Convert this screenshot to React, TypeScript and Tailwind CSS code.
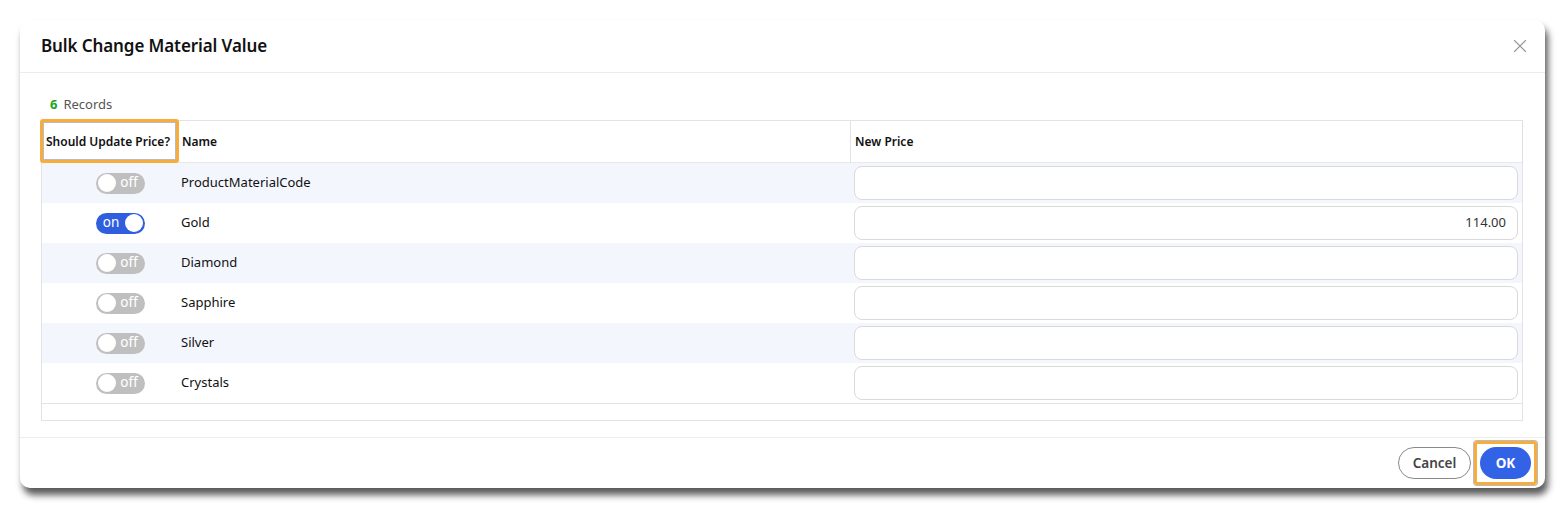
import { X } from "lucide-react";

type Row = { name: string; on: boolean; price: string };

const ROWS: Row[] = [
  { name: "ProductMaterialCode", on: false, price: "" },
  { name: "Gold", on: true, price: "114.00" },
  { name: "Diamond", on: false, price: "" },
  { name: "Sapphire", on: false, price: "" },
  { name: "Silver", on: false, price: "" },
  { name: "Crystals", on: false, price: "" },
];

function Toggle({ on }: { on: boolean }) {
  return (
    <div
      className={`flex items-center w-[49px] h-[21px] rounded-full px-[2px] ${
        on ? "bg-[#2f5fde]" : "bg-[#bfbfbf]"
      }`}
    >
      {on ? (
        <>
          <span className="flex-1 text-center text-[13.5px] leading-none text-white pb-[1px]">on</span>
          <span className="w-[18px] h-[18px] rounded-full bg-white" />
        </>
      ) : (
        <>
          <span className="w-[18px] h-[18px] rounded-full bg-white" />
          <span className="flex-1 text-center text-[13.5px] leading-none text-white pb-[1px]">off</span>
        </>
      )}
    </div>
  );
}

export default function App() {
  return (
    <div
      className="w-[1565px] h-[508px] bg-white pt-[20px] pl-[20px]"
      style={{ fontFamily: '"Noto Sans", "Open Sans", sans-serif' }}
    >
      <div className="w-[1525px] h-[468px] bg-white rounded-[10px] shadow-[3px_7px_7px_rgba(0,0,0,0.65)] flex flex-col">
        {/* Header */}
        <div className="h-[53px] flex items-center justify-between pl-[21px] pr-[14px] border-b border-[#ececec]">
          <span className="text-[17px] font-semibold text-[#111] tracking-[-0.1px]">Bulk Change Material Value</span>
          <X size={22} strokeWidth={1.2} className="text-[#999]" />
        </div>

        {/* Body */}
        <div className="flex-1 px-[21px] pt-[18px]">
          <div className="text-[13px] text-[#555] h-[27px] mb-[2px] flex items-center pl-[9px] gap-[6px]">
            <span className="text-[#1aa51a] font-bold">6</span>
            <span>Records</span>
          </div>
          <div className="w-[1482px] border border-[#e3e3e3]">
            {/* Table head */}
            <div className="flex h-[42px] text-[12px] font-semibold text-[#111] border-b border-[#e8e8e8] shadow-[0_1px_2px_rgba(0,0,0,0.05)]">
              <div className="relative w-[136px] flex items-center pl-[4px]">
                <span>Should Update Price?</span>
                <div className="absolute left-[-2px] top-[-2px] w-[139px] h-[44px] rounded-[3px] border-[3px] border-[#f6ad3e] shadow-[inset_0_0_0_1px_#bbb]" />
              </div>
              <div className="w-[673px] flex items-center pl-[4px] border-r border-[#e3e3e3]">Name</div>
              <div className="flex-1 flex items-center pl-[4px]">New Price</div>
            </div>
            {/* Rows */}
            {ROWS.map((r, i) => (
              <div
                key={r.name}
                className={`flex h-[40px] items-center text-[13px] text-[#111] ${
                  i % 2 === 0 ? "bg-[#f3f6fd]" : "bg-white"
                }`}
              >
                <div className="w-[136px] flex justify-center pl-[20px]">
                  <Toggle on={r.on} />
                </div>
                <div className="w-[673px] pl-[3px]">{r.name}</div>
                <div className="flex-1 pl-[3px] pr-[4px]">
                  <div className="h-[34px] rounded-[8px] border border-[#d9d9d9] bg-white flex items-center justify-end pr-[11px] text-[#333]">
                    {r.price}
                  </div>
                </div>
              </div>
            ))}
            <div className="h-[17px] border-t border-[#e3e3e3]" />
          </div>
        </div>

        {/* Footer */}
        <div className="h-[51px] border-t border-[#ececec] flex items-center justify-end gap-[3px] pr-[8px]">
          <button className="h-[32px] w-[73px] rounded-full border border-[#8a8a8a] text-[13.5px] font-semibold text-[#444] bg-white">
            Cancel
          </button>
          <div className="rounded-[3px] border-[3px] border-[#f6ad3e] p-[3px] shadow-[0_0_0_1px_#bbb]">
            <button className="h-[32px] w-[51px] rounded-full bg-[#3263e6] text-[13.5px] font-bold text-white">OK</button>
          </div>
        </div>
      </div>
    </div>
  );
}
